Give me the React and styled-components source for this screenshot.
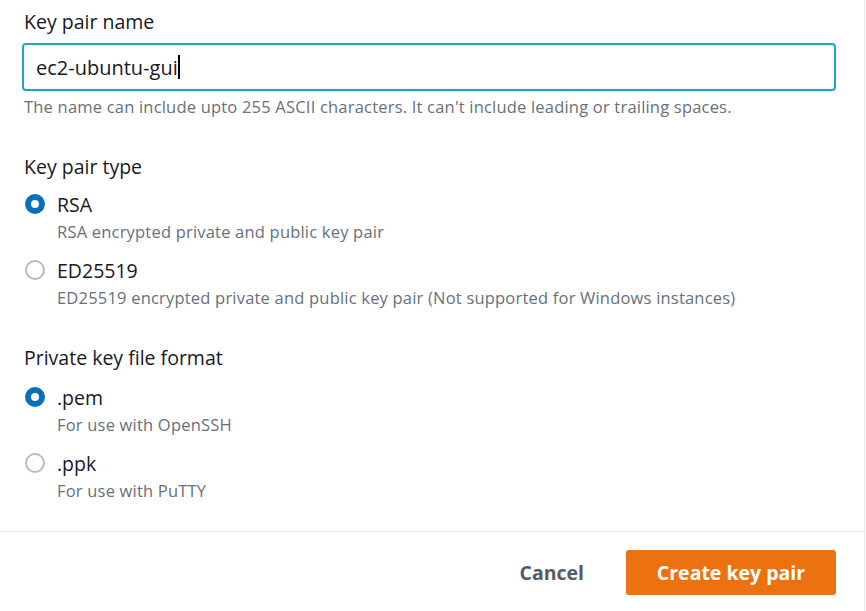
import React, { useState } from "react";
import styled, { createGlobalStyle } from "styled-components";

const GlobalStyle = createGlobalStyle`
  html, body {
    margin: 0;
    padding: 0;
    background: #ffffff;
  }
  body {
    font-family: "Open Sans", "Noto Sans", sans-serif;
    color: #16191f;
  }
`;

const Modal = styled.div`
  box-sizing: border-box;
  width: 865px;
  height: 611px;
  border-right: 1px solid #e4e7e8;
  background: #fff;
  display: flex;
  flex-direction: column;
`;

const Body = styled.div`
  padding: 9px 28px 0 22px;
  display: flex;
  flex-direction: column;
`;

const Label = styled.div`
  font-size: 19.5px;
  line-height: 26px;
  padding-left: 2px;
  margin-top: ${(p) => p.$top || 0}px;
`;

const InputBox = styled.div`
  box-sizing: border-box;
  margin-top: 8px;
  height: 48px;
  border: 2px solid #1ca6c8;
  border-radius: 4px;
  display: flex;
  align-items: center;
  padding-left: 12px;
  font-size: 20px;
  color: #16191f;
`;

const Caret = styled.span`
  display: inline-block;
  width: 2px;
  height: 24px;
  background: #000;
  margin-left: 0;
`;

const Hint = styled.div`
  font-size: 16.5px;
  letter-spacing: 0.2px;
  line-height: 22px;
  color: #687078;
  margin-top: 5px;
  padding-left: 2px;
`;

const RadioRow = styled.label`
  display: flex;
  align-items: center;
  height: 26px;
  margin-top: ${(p) => p.$top}px;
  cursor: pointer;
`;

const Circle = styled.span`
  box-sizing: border-box;
  width: 20px;
  height: 20px;
  border-radius: 50%;
  margin-left: 3px;
  border: ${(p) => (p.$on ? "6px solid #0a70b8" : "2px solid #b5bdbe")};
  background: #fff;
  flex-shrink: 0;
`;

const RadioText = styled.span`
  margin-left: 12px;
  font-size: 19.5px;
`;

const Desc = styled.div`
  margin-top: 4px;
  padding-left: 35px;
  font-size: 16.5px;
  letter-spacing: 0.2px;
  line-height: 22px;
  color: #687078;
`;

const Footer = styled.div`
  margin-top: 29px;
  border-top: 1px solid #eaeded;
  padding: 18px 28px 0 22px;
  display: flex;
  justify-content: flex-end;
  align-items: center;
  gap: 22px;
`;

const CancelButton = styled.button`
  background: none;
  border: none;
  font-family: inherit;
  font-size: 19.5px;
  font-weight: 700;
  color: #545b64;
  padding: 0 20px;
  height: 45px;
  cursor: pointer;
`;

const PrimaryButton = styled.button`
  box-sizing: border-box;
  width: 210px;
  height: 45px;
  background: #ec7211;
  border: none;
  border-radius: 3px;
  color: #fff;
  font-family: inherit;
  font-size: 19.5px;
  font-weight: 700;
  cursor: pointer;
`;

function Radio({ on, label, desc, top, onClick }) {
  return (
    <>
      <RadioRow $top={top} onClick={onClick}>
        <Circle $on={on} />
        <RadioText>{label}</RadioText>
      </RadioRow>
      <Desc>{desc}</Desc>
    </>
  );
}

export default function App() {
  const [type, setType] = useState("rsa");
  const [format, setFormat] = useState("pem");

  return (
    <>
      <GlobalStyle />
      <Modal>
        <Body>
          <Label>Key pair name</Label>
          <InputBox>
            ec2-ubuntu-gui
            <Caret />
          </InputBox>
          <Hint>
            The name can include upto 255 ASCII characters. It can't include leading or trailing spaces.
          </Hint>

          <Label $top={36}>Key pair type</Label>
          <Radio
            top={11}
            on={type === "rsa"}
            label="RSA"
            desc="RSA encrypted private and public key pair"
            onClick={() => setType("rsa")}
          />
          <Radio
            top={14}
            on={type === "ed"}
            label="ED25519"
            desc="ED25519 encrypted private and public key pair (Not supported for Windows instances)"
            onClick={() => setType("ed")}
          />

          <Label $top={36}>Private key file format</Label>
          <Radio
            top={13}
            on={format === "pem"}
            label=".pem"
            desc="For use with OpenSSH"
            onClick={() => setFormat("pem")}
          />
          <Radio
            top={14}
            on={format === "ppk"}
            label=".ppk"
            desc="For use with PuTTY"
            onClick={() => setFormat("ppk")}
          />
        </Body>
        <Footer>
          <CancelButton>Cancel</CancelButton>
          <PrimaryButton>Create key pair</PrimaryButton>
        </Footer>
      </Modal>
    </>
  );
}
